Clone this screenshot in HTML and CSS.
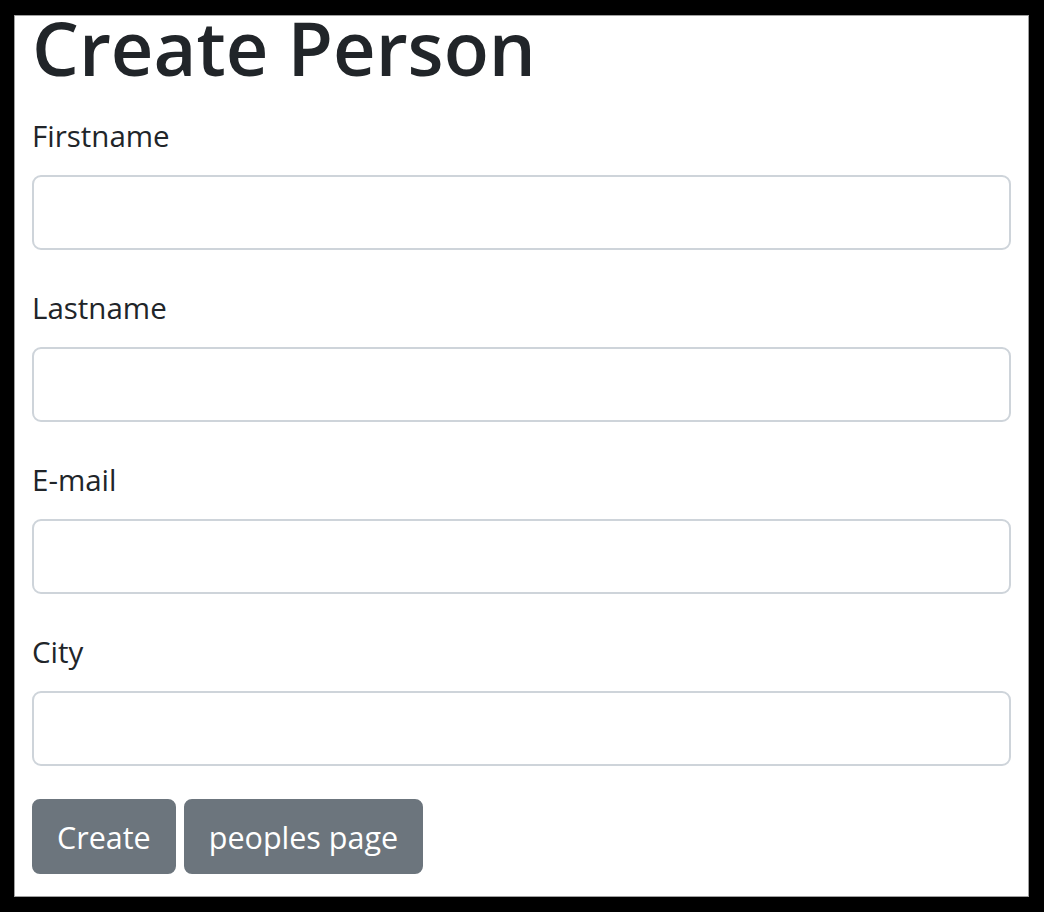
FILE: index.html
```html
<!DOCTYPE html>
<html lang="en">
<head>
<meta charset="utf-8">
<title>Create Person</title>
<link rel="stylesheet" href="styles.css">
</head>
<body>
<div class="page">
  <h1 class="title">Create Person</h1>
  <form class="form">
    <div class="group">
      <label class="label" for="fn">Firstname</label>
      <input class="input" id="fn" type="text">
    </div>
    <div class="group">
      <label class="label" for="ln">Lastname</label>
      <input class="input" id="ln" type="text">
    </div>
    <div class="group">
      <label class="label" for="em">E-mail</label>
      <input class="input" id="em" type="text">
    </div>
    <div class="group">
      <label class="label" for="ci">City</label>
      <input class="input" id="ci" type="text">
    </div>
    <div class="actions">
      <button class="btn" type="button">Create</button>
      <button class="btn" type="button">peoples page</button>
    </div>
  </form>
</div>
<div class="frame"></div>
</body>
</html>
```

FILE: styles.css
```css
html, body {
  margin: 0;
  padding: 0;
  background: #ffffff;
}
body {
  font-family: "Open Sans", "Noto Sans", sans-serif;
  color: #212529;
}
.page {
  padding: 0 32px;
}
.title {
  margin: 0 0 16px 0;
  font-size: 74px;
  line-height: 95px;
  font-weight: 600;
  color: #212529;
}
.form {
  margin: 0;
}
.group {
  margin-bottom: 33px;
}
.label {
  display: block;
  font-size: 29.5px;
  line-height: 48px;
  margin-bottom: 16px;
  padding-top: 1px;
  height: 47px;
}
.input {
  display: block;
  box-sizing: border-box;
  width: 979px;
  height: 75px;
  margin: 0;
  border: 2px solid #ced4da;
  border-radius: 9px;
  background: #fff;
  font-family: inherit;
  font-size: 29px;
  padding: 0 24px;
}
.actions {
  display: flex;
  gap: 8px;
}
.btn {
  box-sizing: border-box;
  height: 75px;
  padding: 0 23px;
  border: 2px solid #6c757d;
  border-radius: 8px;
  background: #6c757d;
  color: #ffffff;
  font-family: inherit;
  font-size: 30.5px;
  line-height: 48px;
}
.frame {
  position: fixed;
  left: 0;
  top: 0;
  right: 0;
  bottom: 0;
  border-style: solid;
  border-color: #000;
  border-width: 15px 15px 15px 14px;
  box-shadow: inset 1px 1px 0 #a0a0a0, inset -1px -1px 0 #a0a0a0;
  pointer-events: none;
}
```
